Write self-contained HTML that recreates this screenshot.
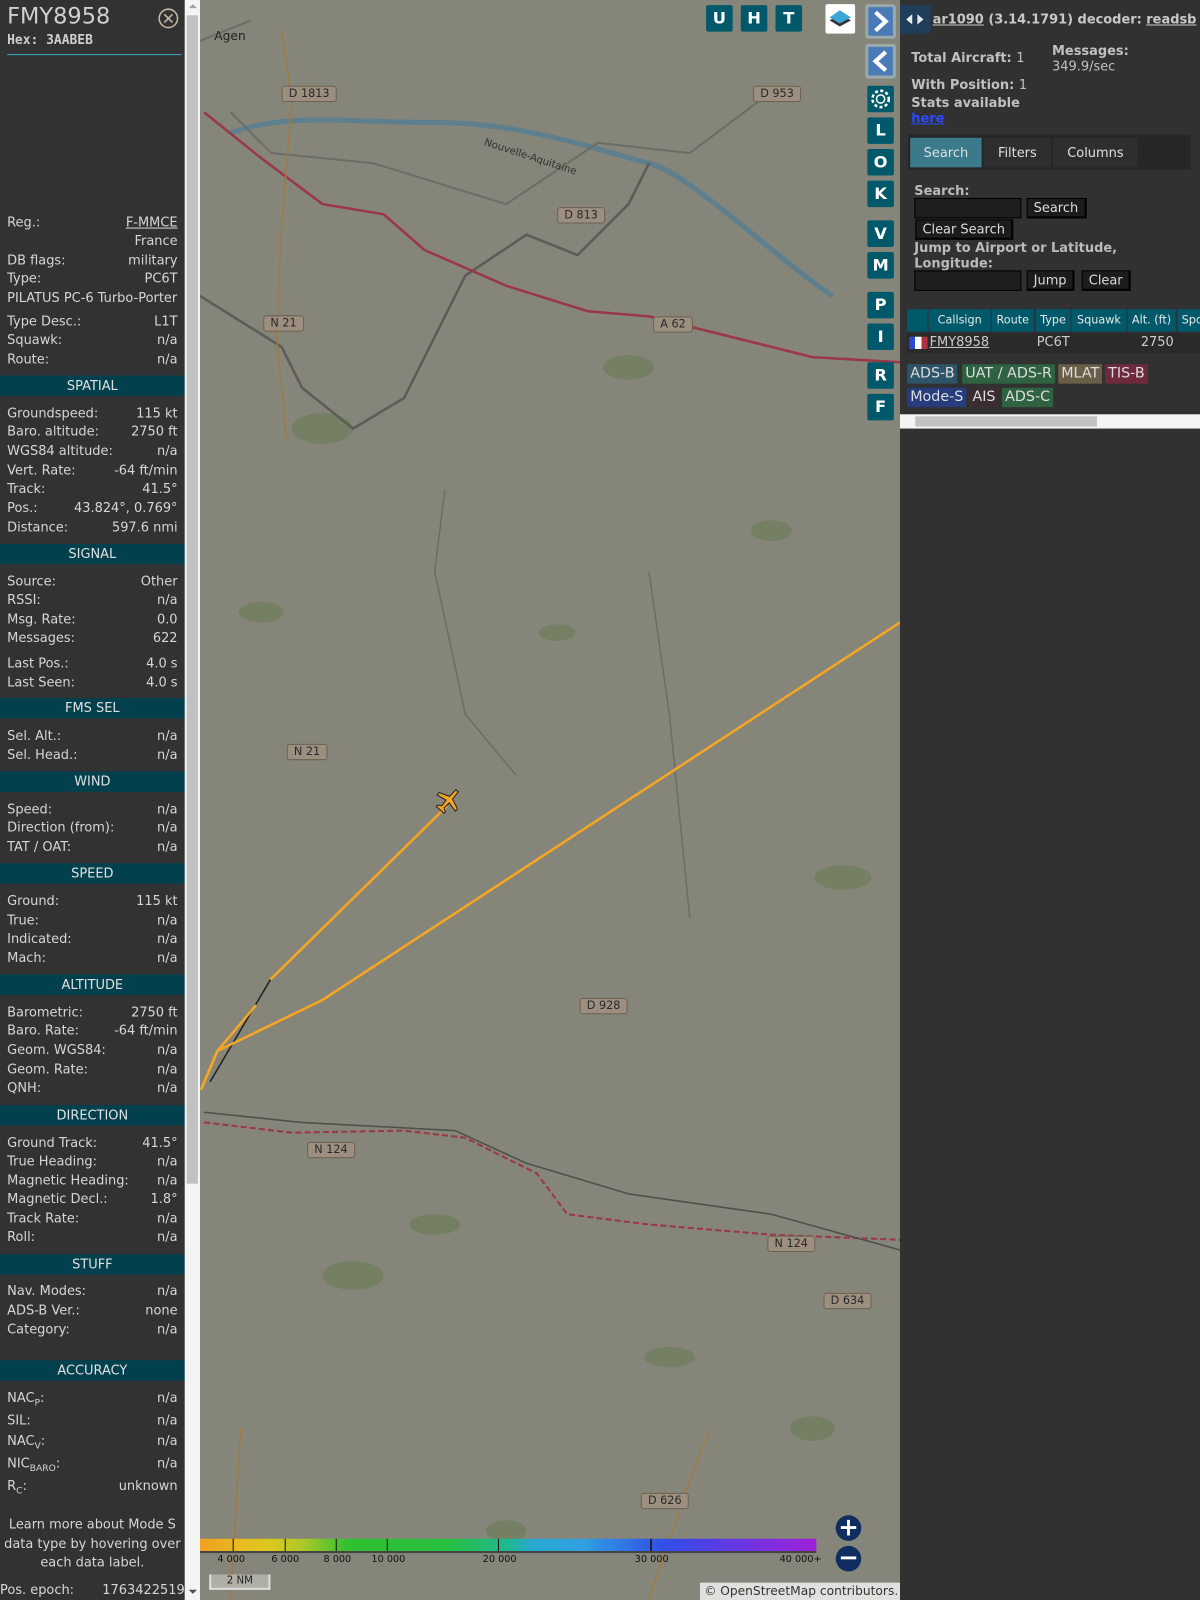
<!DOCTYPE html>
<html><head><meta charset="utf-8">
<style>
*{margin:0;padding:0;box-sizing:border-box}
html,body{width:1200px;height:1600px;overflow:hidden;background:#323232}
#wrap{position:absolute;left:0;top:0;width:1176px;height:1568px;transform:scale(1.020408);transform-origin:0 0;font-family:"DejaVu Sans","Liberation Sans",sans-serif;font-size:12.7px;color:#d6d6d6}
.a{position:absolute}
#left{left:0;top:0;width:181px;height:1568px;background:#323232}
.r{position:absolute;left:7px;width:167px;height:18px;line-height:18px;white-space:nowrap}
.r b{font-weight:normal;float:right}
.h{position:absolute;left:0;width:181px;height:20px;line-height:20px;background:#02404e;text-align:center;color:#e0e0e0}
#sb{left:181px;top:0;width:15px;height:1568px;background:#f4f4f4}
#map{left:196px;top:0;width:686px;height:1568px;background:#858579;overflow:hidden}
.lbl{position:absolute;height:16px;line-height:14px;padding:0 6px;background:#9c8f7f;border:1px solid #6f6052;border-radius:3px;color:#2a2a2a;font-size:11px}
.btn{position:absolute;width:26px;height:26px;background:#00596b;color:#fff;font-weight:bold;font-size:16px;text-align:center;line-height:26px;border-radius:2px}
#right{left:882px;top:0;width:294px;height:1568px;background:#313131;overflow:hidden}
.tb{position:absolute;height:20px;line-height:18px;background:#1c1c1c;border:1px solid #000;border-right-width:2px;border-bottom-width:2px;padding:0 6px;color:#ddd;font-size:12.7px}
.in{position:absolute;height:20px;background:#1e1e1e;border:1px solid #000;width:105px}
.th{position:absolute;top:303px;height:22px;line-height:22px;background:#00596b;color:#e8e8e8;font-size:11px;text-align:center}
.lg{position:absolute;height:19px;line-height:19px;padding:0 3px;font-size:14px;color:#ddd}
</style></head><body><div id="wrap">
<div id="left" class="a">
 <div class="a" style="left:7px;top:4px;font-size:22px;color:#cfcfcf">FMY8958</div>
 <div class="a" style="left:7px;top:31px;font-size:12.7px;font-weight:bold;color:#cfcfcf;font-family:'DejaVu Sans Mono',monospace">Hex: 3AABEB</div>
 <svg class="a" style="left:155px;top:8px" width="20" height="20"><circle cx="10" cy="10" r="9" fill="none" stroke="#c9b9a4" stroke-width="1.5"/><path d="M6 6L14 14M14 6L6 14" stroke="#c9b9a4" stroke-width="1.5"/></svg>
 <div class="a" style="left:7px;top:53px;width:171px;height:1px;background:#3aa9c9"></div>
 <div class="r" style="top:209px">Reg.:<b style="text-decoration:underline">F-MMCE</b></div>
 <div class="r" style="top:227px"><b>France</b></div>
 <div class="r" style="top:246px">DB flags:<b>military</b></div>
 <div class="r" style="top:264px">Type:<b>PC6T</b></div>
 <div class="r" style="top:283px">PILATUS PC-6 Turbo-Porter</div>
 <div class="r" style="top:306px">Type Desc.:<b>L1T</b></div>
 <div class="r" style="top:324px">Squawk:<b>n/a</b></div>
 <div class="r" style="top:343px">Route:<b>n/a</b></div>
 <div class="h" style="top:368px">SPATIAL</div>
 <div class="r" style="top:396px">Groundspeed:<b>115 kt</b></div>
 <div class="r" style="top:414px">Baro. altitude:<b>2750 ft</b></div>
 <div class="r" style="top:433px">WGS84 altitude:<b>n/a</b></div>
 <div class="r" style="top:452px">Vert. Rate:<b>-64 ft/min</b></div>
 <div class="r" style="top:470px">Track:<b>41.5°</b></div>
 <div class="r" style="top:489px">Pos.:<b>43.824°, 0.769°</b></div>
 <div class="r" style="top:508px">Distance:<b>597.6 nmi</b></div>
 <div class="h" style="top:533px">SIGNAL</div>
 <div class="r" style="top:561px">Source:<b>Other</b></div>
 <div class="r" style="top:579px">RSSI:<b>n/a</b></div>
 <div class="r" style="top:598px">Msg. Rate:<b>0.0</b></div>
 <div class="r" style="top:616px">Messages:<b>622</b></div>
 <div class="r" style="top:641px">Last Pos.:<b>4.0 s</b></div>
 <div class="r" style="top:660px">Last Seen:<b>4.0 s</b></div>
 <div class="h" style="top:684px">FMS SEL</div>
 <div class="r" style="top:712px">Sel. Alt.:<b>n/a</b></div>
 <div class="r" style="top:731px">Sel. Head.:<b>n/a</b></div>
 <div class="h" style="top:756px">WIND</div>
 <div class="r" style="top:784px">Speed:<b>n/a</b></div>
 <div class="r" style="top:802px">Direction (from):<b>n/a</b></div>
 <div class="r" style="top:821px">TAT / OAT:<b>n/a</b></div>
 <div class="h" style="top:846px">SPEED</div>
 <div class="r" style="top:874px">Ground:<b>115 kt</b></div>
 <div class="r" style="top:893px">True:<b>n/a</b></div>
 <div class="r" style="top:911px">Indicated:<b>n/a</b></div>
 <div class="r" style="top:930px">Mach:<b>n/a</b></div>
 <div class="h" style="top:955px">ALTITUDE</div>
 <div class="r" style="top:983px">Barometric:<b>2750 ft</b></div>
 <div class="r" style="top:1001px">Baro. Rate:<b>-64 ft/min</b></div>
 <div class="r" style="top:1020px">Geom. WGS84:<b>n/a</b></div>
 <div class="r" style="top:1039px">Geom. Rate:<b>n/a</b></div>
 <div class="r" style="top:1057px">QNH:<b>n/a</b></div>
 <div class="h" style="top:1083px">DIRECTION</div>
 <div class="r" style="top:1111px">Ground Track:<b>41.5°</b></div>
 <div class="r" style="top:1129px">True Heading:<b>n/a</b></div>
 <div class="r" style="top:1148px">Magnetic Heading:<b>n/a</b></div>
 <div class="r" style="top:1166px">Magnetic Decl.:<b>1.8°</b></div>
 <div class="r" style="top:1185px">Track Rate:<b>n/a</b></div>
 <div class="r" style="top:1203px">Roll:<b>n/a</b></div>
 <div class="h" style="top:1229px">STUFF</div>
 <div class="r" style="top:1256px">Nav. Modes:<b>n/a</b></div>
 <div class="r" style="top:1275px">ADS-B Ver.:<b>none</b></div>
 <div class="r" style="top:1294px">Category:<b>n/a</b></div>
 <div class="h" style="top:1333px">ACCURACY</div>
 <div class="r" style="top:1361px">NAC<sub style="font-size:9px">P</sub>:<b>n/a</b></div>
 <div class="r" style="top:1383px">SIL:<b>n/a</b></div>
 <div class="r" style="top:1403px">NAC<sub style="font-size:9px">V</sub>:<b>n/a</b></div>
 <div class="r" style="top:1425px">NIC<sub style="font-size:9px">BARO</sub>:<b>n/a</b></div>
 <div class="r" style="top:1447px">R<sub style="font-size:9px">C</sub>:<b>unknown</b></div>
 <div class="a" style="left:0;top:1485px;width:181px;text-align:center;line-height:18.5px">Learn more about Mode S data type by hovering over each data label.</div>
 <div class="a" style="left:0;top:1549px;width:181px;line-height:18px">Pos. epoch:<span style="float:right">1763422519</span></div>
</div>
<div id="sb" class="a"><div class="a" style="left:2px;top:15px;width:11px;height:1145px;background:#c1c1c1"></div>
<div class="a" style="left:4px;top:4px;width:0;height:0;border:4px solid transparent;border-bottom-color:#a3a3a3;border-top:0"></div>
<div class="a" style="left:4px;top:1558px;width:0;height:0;border:4px solid transparent;border-top-color:#505050;border-bottom:0"></div></div>

<div id="map" class="a">
<svg class="a" style="left:0;top:0" width="686" height="1568">
 <g fill="#6f7d5e" opacity=".8">
  <ellipse cx="420" cy="360" rx="25" ry="12"/><ellipse cx="120" cy="420" rx="30" ry="15"/><ellipse cx="560" cy="520" rx="20" ry="10"/><ellipse cx="60" cy="600" rx="22" ry="10"/><ellipse cx="630" cy="860" rx="28" ry="12"/><ellipse cx="150" cy="1250" rx="30" ry="14"/><ellipse cx="460" cy="1330" rx="25" ry="10"/><ellipse cx="300" cy="1500" rx="20" ry="10"/><ellipse cx="600" cy="1400" rx="22" ry="12"/><ellipse cx="230" cy="1200" rx="25" ry="10"/><ellipse cx="350" cy="620" rx="18" ry="8"/>
 </g>
 <path d="M30 130 C90 110 140 120 230 120 S400 150 440 160 S560 250 620 290" stroke="#5e7f8e" stroke-width="5" fill="none"/>
 <path d="M0 40 L50 20 M30 110 L70 150 L170 160 L300 200 L390 140 L480 150 L560 90" stroke="#6d6d66" stroke-width="2" fill="none"/>
 <path d="M0 290 L80 340 L100 380 L150 420 L200 390 L260 270 L320 230 L370 250 L420 200 L440 160" stroke="#5c5c58" stroke-width="2.5" fill="none"/>
 <path d="M240 480 L230 560 L260 700 L310 760 M440 560 L460 700 L480 900" stroke="#6d6d66" stroke-width="1.5" fill="none"/>
 <path d="M4 110 L60 155 L120 200 L180 210 L220 245 L300 280 L380 305 L440 310 L520 330 L600 350 L686 355" stroke="#9a3848" stroke-width="2.5" fill="none"/>
 <path d="M4 1100 L90 1110 L200 1108 L260 1115 L330 1150 L360 1190 L440 1200 L560 1210 L686 1215" stroke="#9a3848" stroke-width="2" fill="none" stroke-dasharray="6 3"/>
 <path d="M4 1090 L100 1100 L250 1108 L320 1140 L420 1170 L560 1190 L686 1225" stroke="#4f4f4c" stroke-width="1.5" fill="none"/>
 <path d="M80 30 L90 100 L80 220 L75 330 L85 430 M30 1568 L40 1400 M440 1568 L480 1450 L500 1400" stroke="#a07a46" stroke-width="1.5" fill="none"/>
 <path d="M10 1060 L69 960" stroke="#222" stroke-width="1.5"/>
 <path d="M1 1068 L17 1030 L120 980 L686 610" stroke="#f5a623" stroke-width="2.5" fill="none"/>
 <path d="M1 1068 L17 1030 L55 985 M69 960 L242 790" stroke="#f5a623" stroke-width="2.5" fill="none"/>
 <g transform="translate(244 784) rotate(41.5)" fill="#f5a623" stroke="#222" stroke-width="1">
  <path d="M-1.5 -12 L1.5 -12 L2 -3 L12 1 L12 4 L2 2 L1.5 9 L5 11 L5 13 L-5 13 L-5 11 L-1.5 9 L-2 2 L-12 4 L-12 1 L-2 -3 Z"/>
 </g>
 <text x="14" y="39" font-size="12" fill="#222" font-family="DejaVu Sans">Agen</text>
 <text x="278" y="142" font-size="10" fill="#333" font-family="DejaVu Sans" transform="rotate(18 278 142)">Nouvelle-Aquitaine</text>
</svg>
 <div class="lbl" style="left:80px;top:84px">D 1813</div>
 <div class="lbl" style="left:542px;top:84px">D 953</div>
 <div class="lbl" style="left:350px;top:203px">D 813</div>
 <div class="lbl" style="left:62px;top:309px">N 21</div>
 <div class="lbl" style="left:444px;top:310px">A 62</div>
 <div class="lbl" style="left:85px;top:729px">N 21</div>
 <div class="lbl" style="left:372px;top:978px">D 928</div>
 <div class="lbl" style="left:105px;top:1119px">N 124</div>
 <div class="lbl" style="left:556px;top:1211px">N 124</div>
 <div class="lbl" style="left:611px;top:1267px">D 634</div>
 <div class="lbl" style="left:432px;top:1463px">D 626</div>
 <div class="btn" style="left:496px;top:5px">U</div>
 <div class="btn" style="left:530px;top:5px">H</div>
 <div class="btn" style="left:564px;top:5px">T</div>
 <div class="a" style="left:613px;top:4px;width:29px;height:29px;background:#fff;border-radius:2px"><svg width="29" height="29"><path d="M4 16 L14 22 L25 16 L14 10Z" fill="#333"/><path d="M4 13 L14 19 L25 13 L14 6Z" fill="#3aa7d6"/></svg></div>
 <div class="a" style="left:652px;top:4px;width:30px;height:34px;background:#9aa;border-radius:3px;padding:3px"><div style="width:24px;height:28px;background:#4a7ab8"><svg width="24" height="28"><path d="M7 5L17 14L7 23" stroke="#fff" stroke-width="4" fill="none"/></svg></div></div>
 <div class="a" style="left:652px;top:43px;width:30px;height:34px;background:#9aa;border-radius:3px;padding:3px"><div style="width:24px;height:28px;background:#4a7ab8"><svg width="24" height="28"><path d="M17 5L7 14L17 23" stroke="#fff" stroke-width="4" fill="none"/></svg></div></div>
 <div class="btn" style="left:654px;top:84px"><svg width="26" height="26"><circle cx="13" cy="13" r="4" fill="none" stroke="#fff" stroke-width="1.5"/><circle cx="13" cy="13" r="8" fill="none" stroke="#fff" stroke-width="2.5" stroke-dasharray="3 2.3"/></svg></div>
 <div class="btn" style="left:654px;top:115px">L</div>
 <div class="btn" style="left:654px;top:146px">O</div>
 <div class="btn" style="left:654px;top:177px">K</div>
 <div class="btn" style="left:654px;top:216px">V</div>
 <div class="btn" style="left:654px;top:247px">M</div>
 <div class="btn" style="left:654px;top:286px">P</div>
 <div class="btn" style="left:654px;top:317px">I</div>
 <div class="btn" style="left:654px;top:355px">R</div>
 <div class="btn" style="left:654px;top:386px">F</div>
 <div class="a" style="left:0;top:1508px;width:604px;height:12px;background:linear-gradient(90deg,#f0a020 0%,#e6c020 8%,#d8c820 12%,#a8c828 17%,#30c030 24%,#28c040 40%,#20b890 50%,#28a8d0 54%,#30a0e0 62%,#3050e8 75%,#5040e8 82%,#a020d8 100%)"></div>
 <div class="a" style="left:0;top:1520px;width:604px;height:2px;background:#444"></div>
 <div class="a" style="left:32px;top:1508px;width:1px;height:12px;background:#111"></div>
 <div class="a" style="left:83px;top:1508px;width:1px;height:12px;background:#111"></div>
 <div class="a" style="left:133px;top:1508px;width:1px;height:12px;background:#111"></div>
 <div class="a" style="left:183px;top:1508px;width:1px;height:12px;background:#111"></div>
 <div class="a" style="left:292px;top:1508px;width:1px;height:12px;background:#111"></div>
 <div class="a" style="left:441px;top:1508px;width:2px;height:12px;background:#223"></div>
 <div class="a" style="top:1523px;left:0;width:620px;font-size:9.5px;color:#111">
  <span class="a" style="left:17px">4 000</span><span class="a" style="left:70px">6 000</span><span class="a" style="left:121px">8 000</span><span class="a" style="left:168px">10 000</span><span class="a" style="left:277px">20 000</span><span class="a" style="left:426px">30 000</span><span class="a" style="left:568px">40 000+</span></div>
 <div class="a" style="left:9px;top:1543px;width:60px;height:15px;border:2px solid #ddd;border-top:none;background:rgba(255,255,255,.35);font-size:10px;text-align:center;line-height:13px;color:#222">2 NM</div>
 <div class="a" style="left:623px;top:1485px;width:25px;height:25px;border-radius:50%;background:#0f2d5e;color:#fff;font-size:24px;line-height:24px;text-align:center;font-weight:bold">+</div>
 <div class="a" style="left:623px;top:1515px;width:25px;height:25px;border-radius:50%;background:#0f2d5e;color:#fff;font-size:24px;line-height:22px;text-align:center;font-weight:bold">−</div>
 <div class="a" style="left:490px;top:1551px;width:196px;height:17px;background:rgba(255,255,255,.75);font-size:12px;line-height:17px;color:#333;padding-left:4px">© OpenStreetMap contributors.</div>
</div>

<div id="right" class="a">
 <div class="a" style="left:0;top:5px;width:30px;height:28px;background:#1f3f5f;opacity:.9"><svg width="30" height="28"><path d="M12 9L6 14L12 19Z M17 9L23 14L17 19Z" fill="#fff"/></svg></div>
 <div class="a" style="left:32px;top:11px;font-weight:bold;font-size:12.7px;color:#c8c8c8;white-space:nowrap"><u>ar1090</u> (3.14.1791) decoder: <u>readsb</u></div>
 <div class="a" style="left:11px;top:49px;font-weight:bold;color:#c0c0c0">Total Aircraft: <span style="font-weight:normal">1</span></div>
 <div class="a" style="left:149px;top:42px;font-weight:bold;color:#c0c0c0;line-height:15px">Messages:<br><span style="font-weight:normal">349.9/sec</span></div>
 <div class="a" style="left:11px;top:75px;font-weight:bold;color:#c0c0c0">With Position: <span style="font-weight:normal">1</span></div>
 <div class="a" style="left:11px;top:93px;font-weight:bold;color:#c0c0c0;line-height:15px">Stats available<br><u style="color:#2a4bff">here</u></div>
 <div class="a" style="left:8px;top:132px;width:277px;height:34px;background:#262626"></div>
 <div class="a" style="left:10px;top:135px;width:70px;height:29px;background:#3a7a8a;line-height:29px;text-align:center;color:#e0e0e0">Search</div>
 <div class="a" style="left:82px;top:135px;width:66px;height:29px;background:#2e2e2e;line-height:29px;text-align:center;color:#e0e0e0">Filters</div>
 <div class="a" style="left:150px;top:135px;width:83px;height:29px;background:#2e2e2e;line-height:29px;text-align:center;color:#e0e0e0">Columns</div>
 <div class="a" style="left:14px;top:179px;font-weight:bold;color:#bbb">Search:</div>
 <div class="in" style="left:14px;top:194px"></div>
 <div class="tb" style="left:124px;top:194px">Search</div>
 <div class="tb" style="left:15px;top:215px">Clear Search</div>
 <div class="a" style="left:14px;top:235px;font-weight:bold;color:#bbb;line-height:15px">Jump to Airport or Latitude,<br>Longitude:</div>
 <div class="in" style="left:14px;top:265px"></div>
 <div class="tb" style="left:124px;top:265px">Jump</div>
 <div class="tb" style="left:178px;top:265px">Clear</div>
 <div class="th" style="left:7px;width:20px"></div>
 <div class="th" style="left:28px;width:61px">Callsign</div>
 <div class="th" style="left:90px;width:41px">Route</div>
 <div class="th" style="left:133px;width:34px">Type</div>
 <div class="th" style="left:168px;width:54px">Squawk</div>
 <div class="th" style="left:223px;width:47px">Alt. (ft)</div>
 <div class="th" style="left:272px;width:46px;text-align:left;padding-left:4px">Spd</div>
 <div class="a" style="left:7px;top:326px;width:311px;height:20px;background:#2a2a2a"></div>
 <div class="a" style="left:9px;top:330px;width:18px;height:12px;background:linear-gradient(90deg,#2a4bd0 33%,#fff 33%,#fff 66%,#b03040 66%)"></div>
 <div class="a" style="left:29px;top:327px;color:#ccc;text-decoration:underline">FMY8958</div>
 <div class="a" style="left:134px;top:327px;color:#ccc">PC6T</div>
 <div class="a" style="left:236px;top:327px;color:#ccc">2750</div>
 <div class="lg" style="left:7px;top:357px;background:#2d5468">ADS-B</div>
 <div class="lg" style="left:61px;top:357px;background:#2e6240">UAT / ADS-R</div>
 <div class="lg" style="left:155px;top:357px;background:#6a5e46">MLAT</div>
 <div class="lg" style="left:201px;top:357px;background:#6e2a3c">TIS-B</div>
 <div class="lg" style="left:7px;top:380px;background:#263c7c">Mode-S</div>
 <div class="lg" style="left:68px;top:380px;background:#3a2c30">AIS</div>
 <div class="lg" style="left:100px;top:380px;background:#2e6240">ADS-C</div>
 <div class="a" style="left:0;top:406px;width:294px;height:14px;background:#f4f4f4"><div class="a" style="left:15px;top:2px;width:178px;height:10px;background:#c1c1c1"></div></div>
</div>
</div></body></html>
